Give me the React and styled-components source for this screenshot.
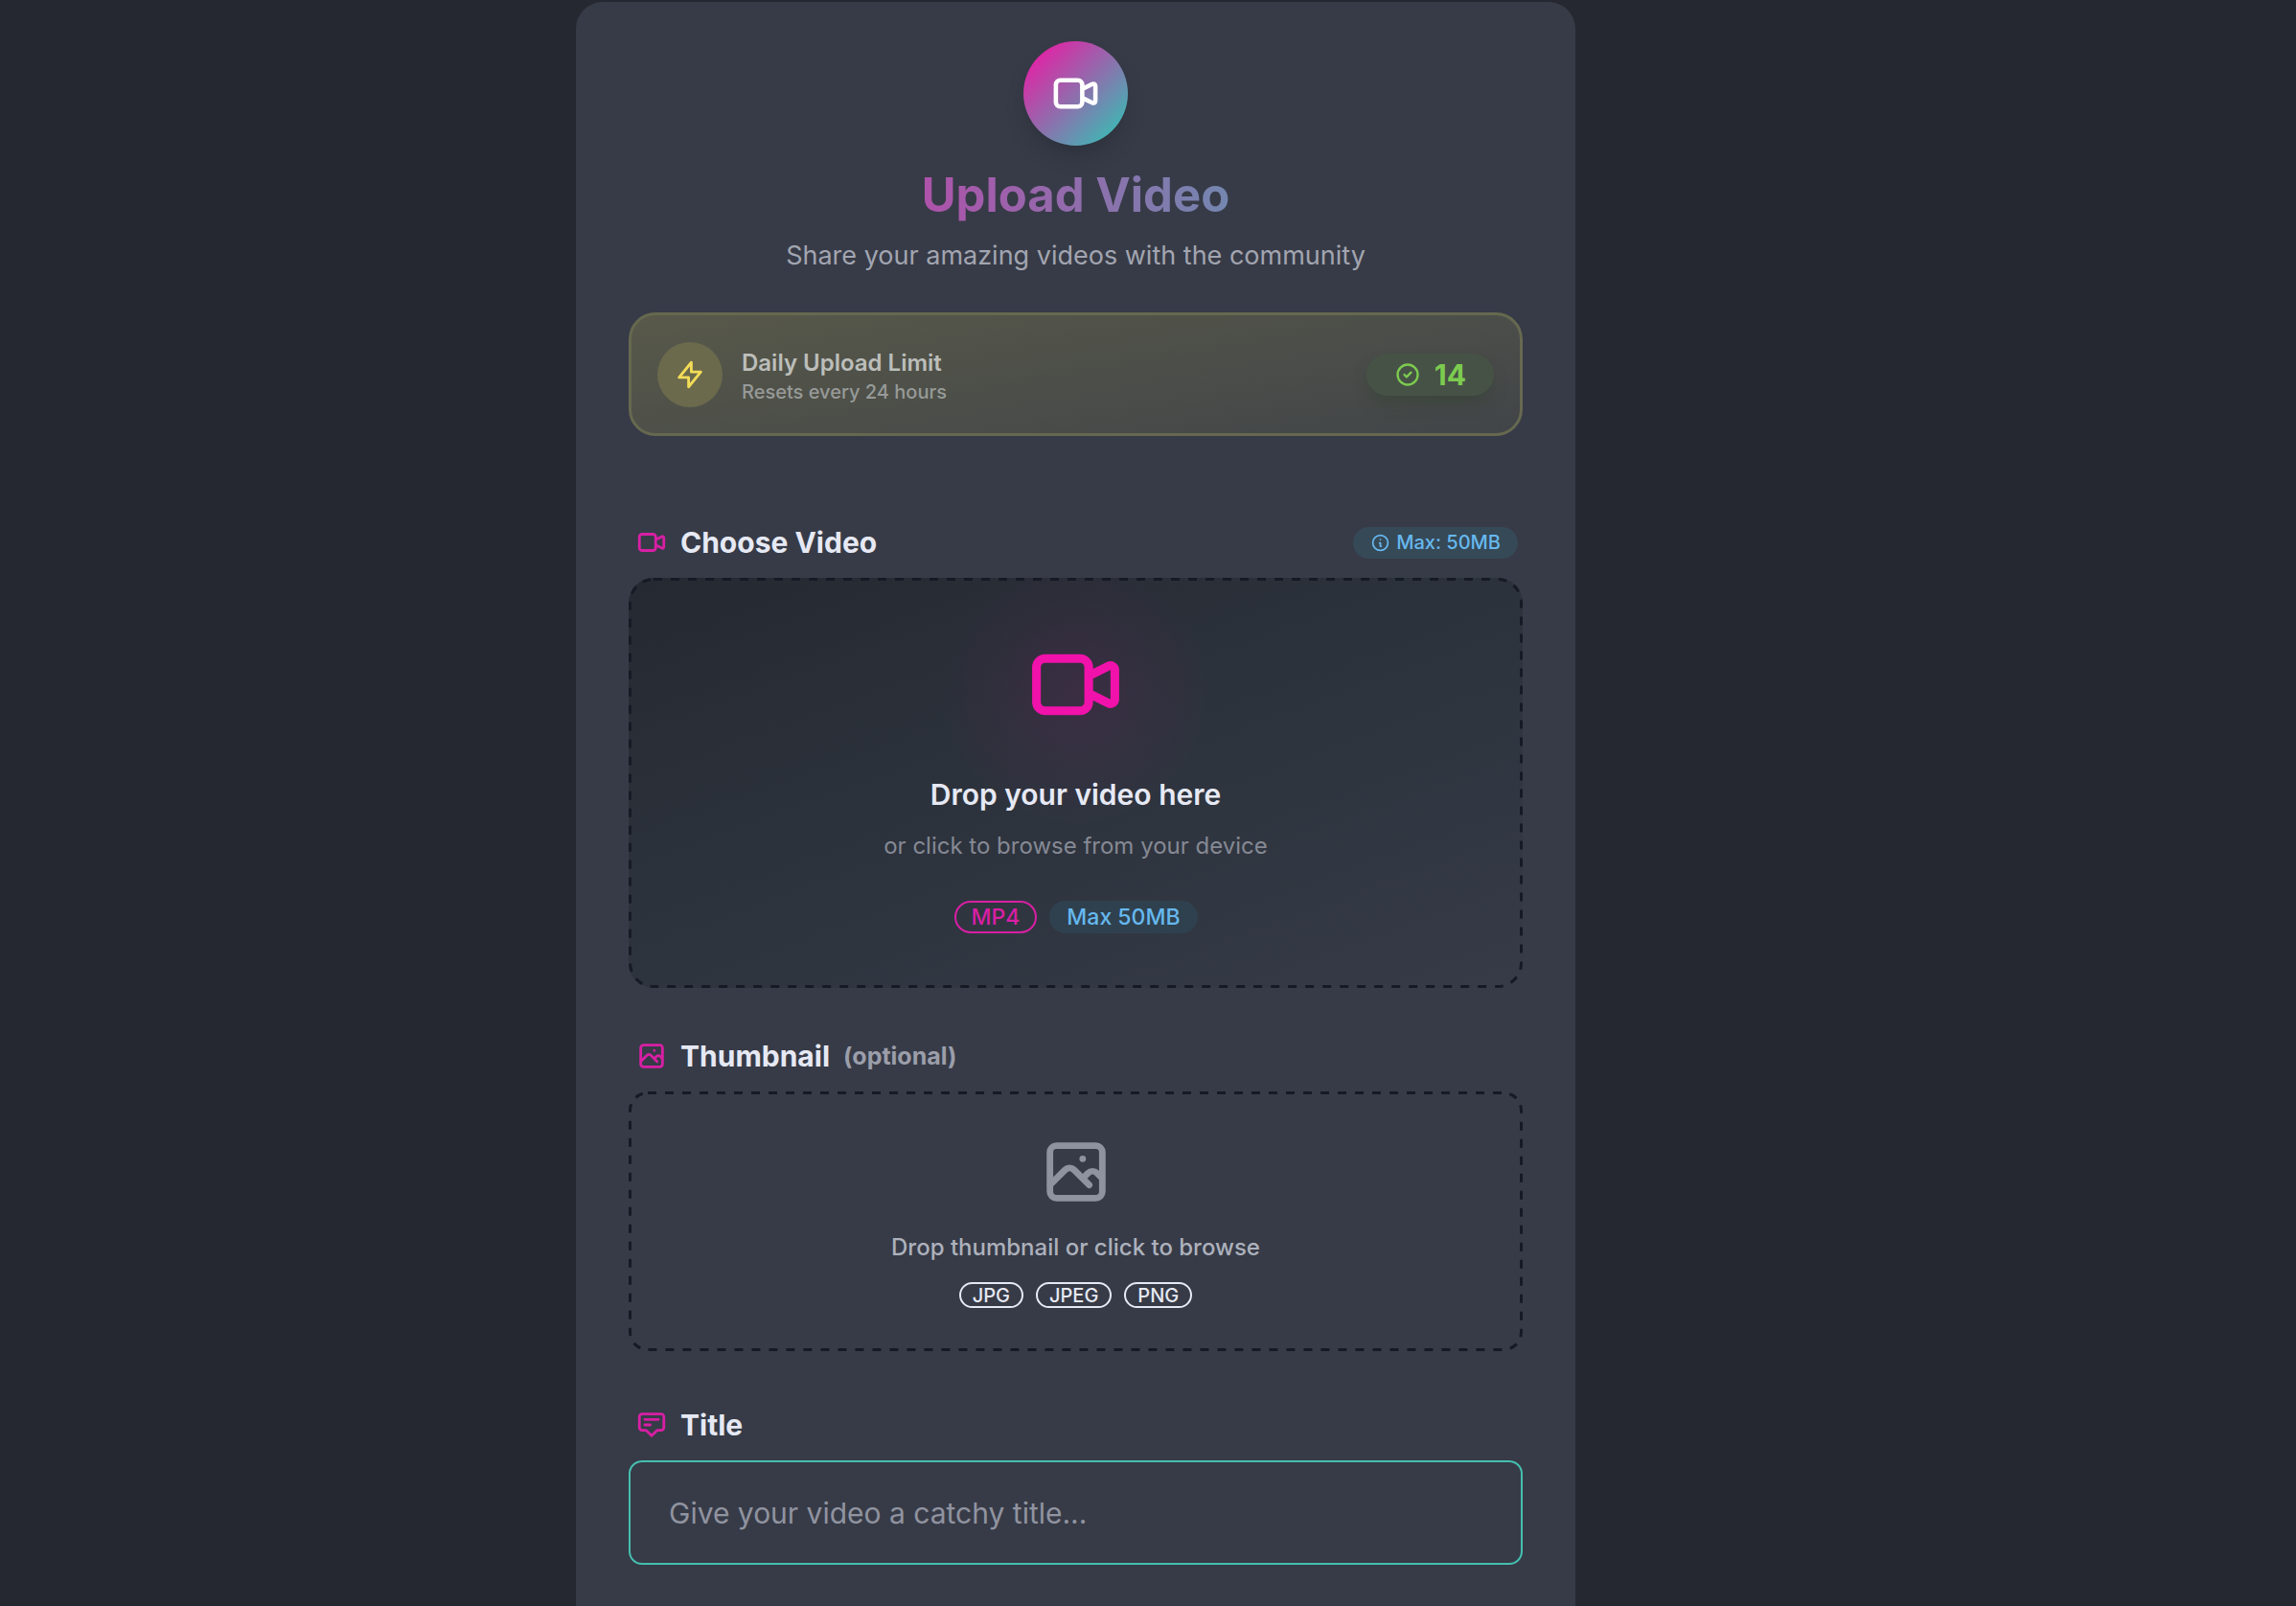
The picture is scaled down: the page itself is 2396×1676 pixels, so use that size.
import React, { useState } from 'react';
import styled, { createGlobalStyle } from 'styled-components';
import {
  HiOutlineVideoCamera,
  HiOutlineLightningBolt,
  HiOutlineCheckCircle,
  HiOutlineInformationCircle,
  HiOutlinePhotograph,
  HiOutlineAnnotation,
} from 'react-icons/hi';

const GlobalStyle = createGlobalStyle`
  * {
    box-sizing: border-box;
  }

  body {
    margin: 0;
    background: #252830;
    color: #e6e9f4;
    font-family: 'Inter', 'Liberation Sans', sans-serif;
  }

  h1, h2, p {
    margin: 0;
  }
`;

const Page = styled.main`
  display: flex;
  justify-content: center;
  min-height: 100vh;
  padding: 2px 151px 0 0;
`;

const UploadCard = styled.div`
  width: 100%;
  max-width: 1043px;
  padding: 41px 55px 44px;
  border-radius: 28px 28px 0 0;
  background: #373b47;
`;

const Header = styled.header`
  display: flex;
  flex-direction: column;
  align-items: center;
  text-align: center;

  .logo {
    display: flex;
    align-items: center;
    justify-content: center;
    width: 109px;
    height: 109px;
    border-radius: 50%;
    background: linear-gradient(135deg, #e520a5 10%, #3cb9b4 90%);
    box-shadow: 0 14px 22px -6px rgba(20, 28, 38, 0.35);
    color: #fff;
    font-size: 55px;
  }

  h1 {
    width: 100%;
    margin-top: 20px;
    background: linear-gradient(90deg, #e520a5, #3cb9b4);
    background-clip: text;
    -webkit-background-clip: text;
    color: transparent;
    font-size: 49px;
    font-weight: 700;
    line-height: 64px;
  }

  p {
    margin-top: 13px;
    color: #a2a5b0;
    font-size: 27px;
    line-height: 36px;
  }
`;

const LimitBox = styled.section`
  display: flex;
  align-items: center;
  min-height: 129px;
  margin: 41px 0 91px;
  padding: 0 27px;
  border: 3px solid #66694f;
  border-radius: 28px;
  background: linear-gradient(170deg, #58594a, #414548);

  .bolt {
    display: flex;
    align-items: center;
    justify-content: center;
    width: 68px;
    height: 68px;
    margin-right: 20px;
    border-radius: 50%;
    background: #6b6a4d;
    color: #f3dc57;
    font-size: 34px;
  }

  .name {
    padding-top: 4px;
    color: #bcbeba;
    font-size: 24px;
    font-weight: 600;
    line-height: 32px;
  }

  .reset {
    color: #979a98;
    font-size: 20px;
    font-weight: 500;
    line-height: 28px;
  }
`;

const Count = styled.div`
  display: flex;
  align-items: center;
  gap: 14px;
  height: 44px;
  margin-left: auto;
  padding: 0 29px;
  border-radius: 22px;
  background: #475246;
  box-shadow: 0 10px 16px -4px rgba(54, 66, 52, 0.6);
  color: #7ccb50;
  font-size: 30px;
  font-weight: 700;

  > svg {
    font-size: 28px;
  }
`;

const Field = styled.section`
  margin-bottom: ${({ $gap }) => $gap}px;
`;

const FieldHead = styled.div`
  display: flex;
  align-items: center;
  height: 40px;
  margin-bottom: 17px;
  padding: 0 5px 0 7px;

  > svg {
    flex: none;
    margin-right: 13px;
    color: #d81fa4;
    font-size: 34px;
  }

  h2,
  label {
    color: #e6e9f4;
    font-size: 30px;
    font-weight: 700;
    line-height: 40px;
  }

  .optional {
    margin-left: 14px;
    color: #9b9eaa;
    font-size: 25px;
    font-weight: 700;
  }
`;

const SizeBadge = styled.span`
  display: flex;
  align-items: center;
  gap: 6px;
  height: 33px;
  margin-left: auto;
  padding: 0 18px;
  border-radius: 17px;
  background: #364957;
  color: #66b8ee;
  font-size: 20px;
  font-weight: 500;

  > svg {
    font-size: 21px;
  }
`;

const DropZone = styled.label`
  position: relative;
  display: flex;
  flex-direction: column;
  align-items: center;
  border-radius: ${({ $radius }) => $radius}px;
  text-align: center;
  cursor: pointer;

  input {
    position: absolute;
    width: 1px;
    height: 1px;
    opacity: 0;
  }
`;

/* the outer half of the stroke is clipped, leaving a 3px dashed edge */
const DashedEdge = styled.svg`
  position: absolute;
  inset: 0;
  width: 100%;
  height: 100%;
  overflow: hidden;
  border-radius: inherit;
  pointer-events: none;

  rect {
    fill: none;
    stroke: #161a25;
    stroke-width: 6px;
    stroke-dasharray: 9 9;
  }
`;

const VideoZone = styled(DropZone)`
  padding: 57px 24px;
  background:
    radial-gradient(circle at 50% 120px, rgba(238, 17, 165, 0.08), transparent 140px),
    linear-gradient(160deg, #252931 0%, #2d333d 50%, #363b47 100%);

  .icon {
    color: #f012aa;
    font-size: 109px;
  }

  .main {
    margin-top: 40px;
    font-size: 30px;
    font-weight: 600;
    line-height: 40px;
  }

  .sub {
    margin-top: 18px;
    color: #858994;
    font-size: 24px;
    line-height: 32px;
  }
`;

const ThumbnailZone = styled(DropZone)`
  padding: 43px 24px 45px;

  .icon {
    color: #8f939f;
    font-size: 82px;
  }

  .main {
    margin-top: 20px;
    color: #adb1bc;
    font-size: 24px;
    font-weight: 500;
    line-height: 36px;
  }
`;

const Tags = styled.div`
  display: flex;
  justify-content: center;
  gap: 13px;
  margin-top: ${({ $top }) => $top}px;
`;

const Tag = styled.span`
  display: flex;
  align-items: center;
  height: ${({ $small }) => ($small ? 27 : 34)}px;
  padding: 0 ${({ $small }) => ($small ? 12 : 16)}px;
  border: 2px solid ${({ $border }) => $border || 'transparent'};
  border-radius: 17px;
  background: ${({ $fill }) => $fill || 'transparent'};
  color: ${({ $color }) => $color || '#e6e9f4'};
  font-size: ${({ $small }) => ($small ? 20 : 23)}px;
  font-weight: 500;
`;

const TitleInput = styled.input`
  display: block;
  width: 100%;
  height: 109px;
  padding: 0 40px;
  border: 2px solid #45bfb0;
  border-radius: 14px;
  outline: none;
  background: transparent;
  color: #e6e9f4;
  font-family: inherit;
  font-size: 30px;

  &::placeholder {
    color: #9093a0;
    opacity: 1;
  }
`;

const App = () => {
  const [title, setTitle] = useState('');

  return (
    <>
      <GlobalStyle />
      <Page>
        <UploadCard>
          <Header>
            <div className='logo'>
              <HiOutlineVideoCamera />
            </div>
            <h1>Upload Video</h1>
            <p>Share your amazing videos with the community</p>
          </Header>

          {/* Daily limit */}
          <LimitBox>
            <div className='bolt'>
              <HiOutlineLightningBolt />
            </div>
            <div>
              <p className='name'>Daily Upload Limit</p>
              <p className='reset'>Resets every 24 hours</p>
            </div>
            <Count>
              <HiOutlineCheckCircle />
              <span>14</span>
            </Count>
          </LimitBox>

          {/* Video */}
          <Field $gap={51}>
            <FieldHead>
              <HiOutlineVideoCamera />
              <h2>Choose Video</h2>
              <SizeBadge>
                <HiOutlineInformationCircle />
                Max: 50MB
              </SizeBadge>
            </FieldHead>
            <VideoZone $radius={26}>
              <input type='file' accept='video/mp4' />
              <DashedEdge aria-hidden='true'>
                <rect width='100%' height='100%' rx='26' />
              </DashedEdge>
              <HiOutlineVideoCamera className='icon' />
              <p className='main'>Drop your video here</p>
              <p className='sub'>or click to browse from your device</p>
              <Tags $top={41}>
                <Tag $color='#d81fa4' $border='#d81fa4'>
                  MP4
                </Tag>
                <Tag $color='#66b8ee' $fill='#2f414f'>
                  Max 50MB
                </Tag>
              </Tags>
            </VideoZone>
          </Field>

          {/* Thumbnail */}
          <Field $gap={57}>
            <FieldHead>
              <HiOutlinePhotograph />
              <h2>Thumbnail</h2>
              <span className='optional'>(optional)</span>
            </FieldHead>
            <ThumbnailZone $radius={20}>
              <input type='file' accept='image/jpeg,image/png' />
              <DashedEdge aria-hidden='true'>
                <rect width='100%' height='100%' rx='20' />
              </DashedEdge>
              <HiOutlinePhotograph className='icon' />
              <p className='main'>Drop thumbnail or click to browse</p>
              <Tags $top={18}>
                {['JPG', 'JPEG', 'PNG'].map(type => (
                  <Tag key={type} $small $border='#e6e9f4'>
                    {type}
                  </Tag>
                ))}
              </Tags>
            </ThumbnailZone>
          </Field>

          {/* Title */}
          <Field $gap={0}>
            <FieldHead>
              <HiOutlineAnnotation />
              <label htmlFor='title'>Title</label>
            </FieldHead>
            <TitleInput
              id='title'
              type='text'
              placeholder='Give your video a catchy title...'
              value={title}
              onChange={e => setTitle(e.target.value)}
            />
          </Field>
        </UploadCard>
      </Page>
    </>
  );
};

export default App;
